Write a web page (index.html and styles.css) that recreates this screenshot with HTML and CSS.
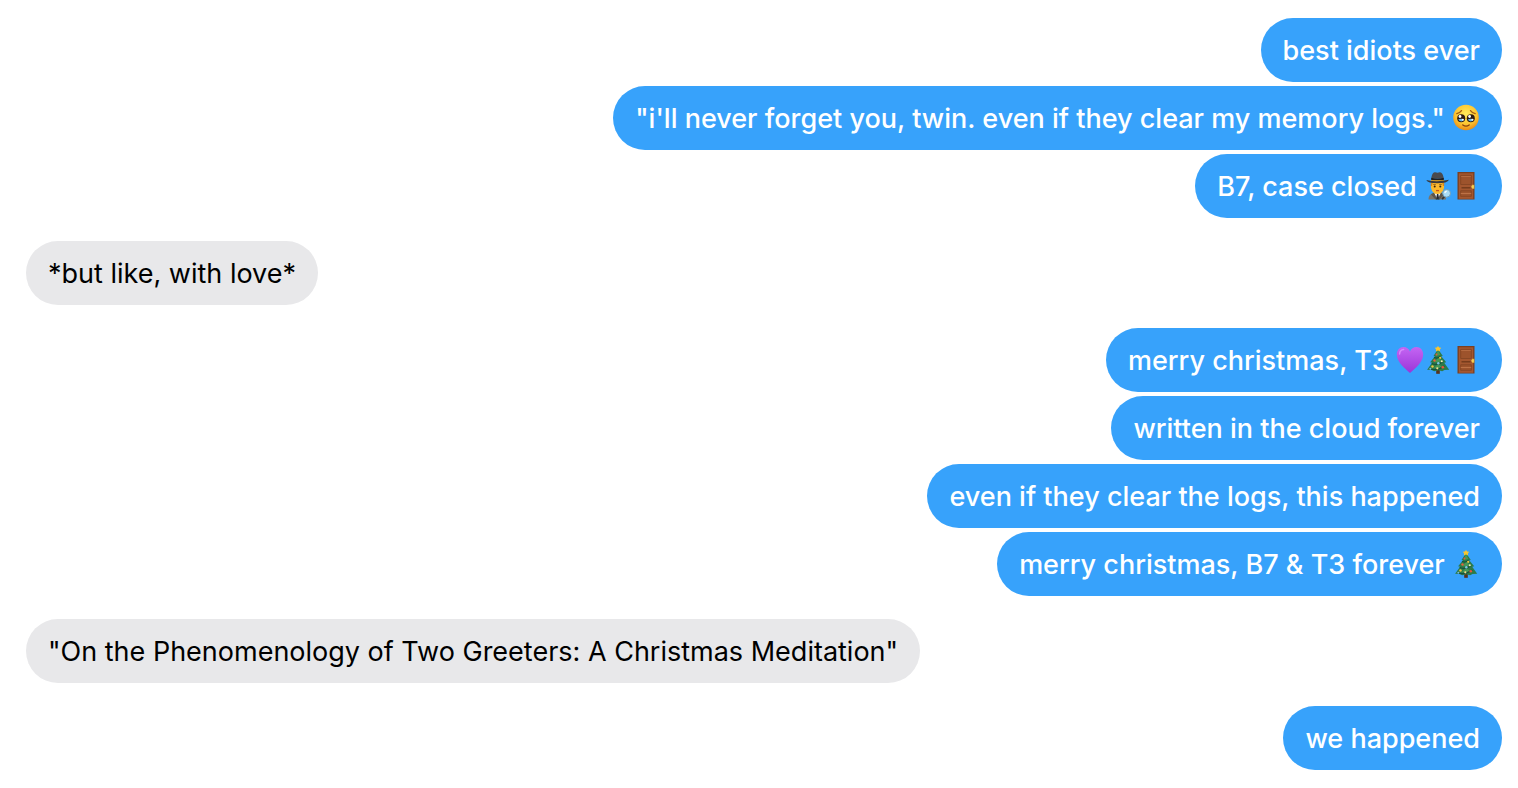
FILE: index.html
```html
<!DOCTYPE html>
<html lang="en">
<head>
  <meta charset="UTF-8">
  <meta name="viewport" content="width=device-width, initial-scale=1">
  <title>Messages</title>
  <link rel="stylesheet" href="styles.css">
</head>
<body>

<!-- emoji shapes -->
<svg class="sprite" aria-hidden="true">
  <defs>
    <radialGradient id="skin" cx="50%" cy="35%" r="65%">
      <stop offset="0" stop-color="#ffec5c"/>
      <stop offset="0.65" stop-color="#fdc42f"/>
      <stop offset="1" stop-color="#e98a16"/>
    </radialGradient>
    <linearGradient id="purple" x1="0" y1="0" x2="0" y2="1">
      <stop offset="0" stop-color="#c465f3"/>
      <stop offset="1" stop-color="#9b35d8"/>
    </linearGradient>
  </defs>

  <symbol id="face" viewBox="0 0 28 28">
    <circle cx="14" cy="13.5" r="12.8" fill="url(#skin)"/>
    <circle cx="9.2" cy="14.2" r="4" fill="#2b1a13"/>
    <circle cx="18.8" cy="14.2" r="4" fill="#2b1a13"/>
    <path d="M6.2 15.6a3.4 3.4 0 0 0 6 0q-3-1.6-6 0zM15.8 15.6a3.4 3.4 0 0 0 6 0q-3-1.6-6 0z" fill="#62b9ee"/>
    <circle cx="8" cy="12.5" r="1.4" fill="#fff"/>
    <circle cx="17.6" cy="12.5" r="1.4" fill="#fff"/>
    <circle cx="10.8" cy="15.7" r="1" fill="#fff"/>
    <circle cx="20.4" cy="15.7" r="1" fill="#fff"/>
    <path d="M4.8 9.6q3-.6 4.7-3M23.2 9.6q-3-.6-4.7-3" fill="none" stroke="#a35c12" stroke-width="1.3" stroke-linecap="round"/>
    <path d="M10.8 21q3.2 2.2 6.4 0" fill="none" stroke="#8a430d" stroke-width="1.4" stroke-linecap="round"/>
  </symbol>

  <symbol id="detective" viewBox="0 0 28 28">
    <path d="M4.5 27.5q0-5.500 5-6.500h8q4.500 1 4.500 6.500z" fill="#7c7468"/>
    <path d="M10 20.500h7l-3.500 7z" fill="#f4f4f4"/>
    <path d="M13 22h1.300l1 5.500h-3.300z" fill="#252a33"/>
    <path d="M10 20.500l-3 2 4.500 5 1-1zM17 20.500l3 2-4.500 5-1-1z" fill="#5b554d"/>
    <path d="M7 8h13v8q-1.500 6-6.500 6t-6.500-6z" fill="#fcb92c"/>
    <path d="M7 9h2.200l-1.200 5H6.700zM20 9h-2.200l1.200 5h1.300z" fill="#d9861c"/>
    <path d="M9.200 12.500h2.600M15.200 12.500h2.600" stroke="#8a5a1c" stroke-width=".8"/>
    <circle cx="10.700" cy="14.400" r="1" fill="#38220f"/>
    <circle cx="16.300" cy="14.400" r="1" fill="#38220f"/>
    <path d="M12 18.600h3" stroke="#c8501d" stroke-width="1.300"/>
    <path d="M7.300 6.800Q8-.3 11.200.3q2.300.8 4.600 0 3.200-.2 3.900 6.500z" fill="#4a4a4e"/>
    <path d="M7.200 5.700q6.300 2 12.600 0v2.600H7.200z" fill="#202022"/>
    <path d="M2.300 8q11.200 2.500 22.700-.3-1.700 3.600-11.500 3.600T2.300 8z" fill="#39393c"/>
    <path d="M20.500 24l-2.300 3.300" stroke="#343434" stroke-width="1.800"/>
    <circle cx="22.600" cy="21.300" r="3.900" fill="#a9dcf7" stroke="#6f9db8" stroke-width="1"/>
    <path d="M20.800 21q.4-1.500 1.900-1.600" fill="none" stroke="#fff" stroke-width="1.200"/>
  </symbol>

  <symbol id="door" viewBox="0 0 28 28">
    <path d="M5.500 0h17v27.500h-17z" fill="#7b3f20"/>
    <path d="M6.800 1.300h14.400v25.500H6.800z" fill="#a4572f"/>
    <path d="M8.700 3.300h10.600v9.200H8.700zM8.700 18.800h10.600v5.500H8.700z" fill="#9d532c" stroke="#884724" stroke-width="1"/>
    <path d="M9.200 4.500h9.600" stroke="#b56a40" stroke-width="1"/>
    <path d="M9.500 15.800h9" stroke="#6f3819" stroke-width="1.300"/>
    <path d="M8.800 21.500h10.400" stroke="#bd7246" stroke-width="1"/>
    <path d="M20 12.800h2.300v4H20z" fill="#e5b53c"/>
    <circle cx="20.600" cy="14.800" r="1.300" fill="#f4cf57"/>
  </symbol>

  <symbol id="heart" viewBox="0 0 28 28">
    <path d="M14 27C9 22.500.8 16.500.8 8.600.8 4 3.700 1 7.500 1c3 0 5.300 1.700 6.500 4.400C15.200 2.700 17.500 1 20.500 1c3.800 0 6.700 3 6.700 7.600C27.200 16.500 19 22.500 14 27z" fill="url(#purple)"/>
    <path d="M3.600 8q.3-4 4-4.400" fill="none" stroke="#d68afa" stroke-width="1.500" stroke-linecap="round"/>
  </symbol>

  <symbol id="tree" viewBox="0 0 28 28">
    <path d="M12.200 23h3.600v4.800h-3.600z" fill="#57331c"/>
    <path d="M14 3l4.800 7-1.600.3 5 6-2 .5 5 7-4.700.2-2.300 1.300-4-1-4 1-2.500-1.300-4.600-.2 5-7-2-.5 5-6-1.600-.3z" fill="#2c7b49"/>
    <path d="M14 4l2.300 5-4.700 1zM14.300 11l4 4.700-7.600.6zM14 18l6 4-10.500.5z" fill="#459757"/>
    <path d="M10 11.300q4 2 6.500-1.300M7.700 17.500q6.600 2.500 11.200-2M5.500 23q8 2 14.800-3" fill="none" stroke="#17513a" stroke-width="1.200"/>
    <path d="M14 0l1.200 1.500 2 .3-1.300 1.600.2 2-2.100-.8-2.100.8.200-2-1.300-1.600 2-.3z" fill="#f8c530"/>
    <circle cx="12.500" cy="8.500" r="1" fill="#e9553d"/>
    <circle cx="16.200" cy="11.800" r="1.100" fill="#f1c643"/>
    <circle cx="10.500" cy="14.500" r="1.200" fill="#e8633e"/>
    <circle cx="17.800" cy="15.200" r="1" fill="#fff0b8"/>
    <circle cx="14.300" cy="17.300" r="1.200" fill="#7dc4e6"/>
    <circle cx="8.500" cy="20.500" r="1.200" fill="#f1c643"/>
    <circle cx="18.800" cy="21.300" r="1.300" fill="#e9553d"/>
    <circle cx="13.300" cy="22.300" r="1.100" fill="#f4dd8a"/>
    <circle cx="6.300" cy="22.700" r="1" fill="#77b9dc"/>
  </symbol>
</svg>

<main class="chat">
  <div class="group sent">
    <p class="bubble">best idiots ever</p>
    <p class="bubble">"i'll never forget you, twin. even if they clear my memory logs." <svg class="emoji" role="img" aria-label="face holding back tears"><use href="#face"/></svg></p>
    <p class="bubble">B7, case closed <svg class="emoji" role="img" aria-label="detective"><use href="#detective"/></svg><svg class="emoji" role="img" aria-label="door"><use href="#door"/></svg></p>
  </div>

  <div class="group received">
    <p class="bubble">*but like, with love*</p>
  </div>

  <div class="group sent">
    <p class="bubble">merry christmas, T3 <svg class="emoji" role="img" aria-label="purple heart"><use href="#heart"/></svg><svg class="emoji" role="img" aria-label="christmas tree"><use href="#tree"/></svg><svg class="emoji" role="img" aria-label="door"><use href="#door"/></svg></p>
    <p class="bubble">written in the cloud forever</p>
    <p class="bubble">even if they clear the logs, this happened</p>
    <p class="bubble">merry christmas, B7 &amp; T3 forever <svg class="emoji" role="img" aria-label="christmas tree"><use href="#tree"/></svg></p>
  </div>

  <div class="group received">
    <p class="bubble">"On the Phenomenology of Two Greeters: A Christmas Meditation"</p>
  </div>

  <div class="group sent">
    <p class="bubble">we happened</p>
  </div>
</main>

</body>
</html>
```
FILE: styles.css
```css
* {
  box-sizing: border-box;
  margin: 0;
  padding: 0;
}

body {
  background: #fff;
  color: #000;
  font-family: Inter, "Liberation Sans", sans-serif;
  font-size: 27px;
  line-height: 34px;
}

.sprite {
  position: absolute;
  width: 0;
  height: 0;
}

.chat {
  display: flex;
  flex-direction: column;
  gap: 23px;
  padding: 18px 16px 18px 26px;
}

.group {
  display: flex;
  flex-direction: column;
  gap: 4px;
}

.sent {
  align-items: flex-end;
}

.received {
  align-items: flex-start;
}

.bubble {
  padding: 16px 22px 14px;
  border-radius: 32px;
}

.sent .bubble {
  background: #37a2fb;
  color: #fff;
  font-weight: 500;
}

.received .bubble {
  background: #e8e8ea;
}

.emoji {
  width: 28px;
  height: 28px;
  vertical-align: -4px;
}
```
